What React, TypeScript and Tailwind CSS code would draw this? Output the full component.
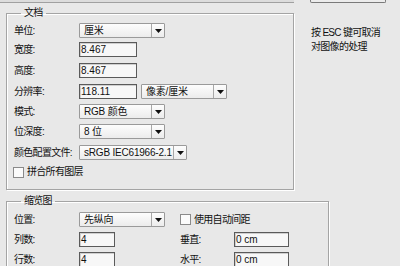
import React from 'react'

const font = { fontFamily: '"Liberation Sans", "Noto Sans CJK SC", sans-serif' }

function Arrow() {
  return (
    <svg width="7" height="4" viewBox="0 0 7 4" className="block">
      <path d="M0 0h7L3.5 4z" fill="#111" />
    </svg>
  )
}

function Select({ value, w }: { value: string; w: string }) {
  return (
    <div
      className={`flex h-[15px] ${w} items-stretch border border-[#9a9a9a] bg-gradient-to-b from-[#fdfdfd] to-[#ececec] rounded-[1px]`}
    >
      <div className="flex-1 pl-[4px] text-[10px] leading-[13px] tracking-[-0.2px] text-[#111] whitespace-nowrap overflow-hidden">{value}</div>
      <div className="flex w-[13px] items-center justify-center border-l border-[#a8a8a8]">
        <Arrow />
      </div>
    </div>
  )
}

function Input({ value, w }: { value: string; w: string }) {
  return (
    <div className={`h-[15px] ${w} border border-[#5a5a5a] bg-[#f7f7f7] pl-[1px] text-[10px] leading-[13px] text-[#111] shadow-[inset_1px_1px_0_#cfcfcf] whitespace-pre`}>
      {value}
    </div>
  )
}

function Check() {
  return <div className="h-[11px] w-[11px] border border-[#8a8a8a] bg-[#fbfbfb]" />
}

function Row({ label, children, mt }: { label: string; children: React.ReactNode; mt: string }) {
  return (
    <div className={`flex h-[15px] items-center ${mt}`}>
      <div className="w-[65px] text-[10px] leading-[15px] tracking-[-0.7px] text-[#111] whitespace-nowrap">{label}</div>
      {children}
    </div>
  )
}

export default function App() {
  return (
    <div className="h-[266px] w-[400px] overflow-hidden bg-[#e8e8e8]" style={font}>
      <div className="flex h-[3px]">
        <div className="w-[294px] border-b border-[#a0a0a0] bg-[#dcdcdc]" />
        <div className="ml-[16px] w-[76px] rounded-b-[2px] border-x border-b border-[#7a7a7a] bg-[#ececec]" />
      </div>

      <div className="flex">
        <fieldset className="ml-[6px] mt-[4px] h-[183px] w-[288px] border border-[#a4a4a4] pl-[7px] shadow-[inset_1px_1px_0_#fff,1px_1px_0_#fff]">
          <legend className="ml-[7px] px-[3px] text-[10px] leading-[12px] tracking-[-0.7px] text-[#111]">文档</legend>
          <Row label="单位:" mt="mt-[4px]">
            <Select value="厘米" w="w-[86px]" />
          </Row>
          <Row label="宽度:" mt="mt-[4px]">
            <Input value="8.467" w="w-[58px]" />
          </Row>
          <Row label="高度:" mt="mt-[6px]">
            <Input value="8.467" w="w-[58px]" />
          </Row>
          <Row label="分辨率:" mt="mt-[6px]">
            <Input value="118.11" w="w-[58px]" />
            <div className="ml-[4px]">
              <Select value="像素/厘米" w="w-[86px]" />
            </div>
          </Row>
          <Row label="模式:" mt="mt-[5px]">
            <Select value="RGB 颜色" w="w-[86px]" />
          </Row>
          <Row label="位深度:" mt="mt-[5px]">
            <Select value="8 位" w="w-[86px]" />
          </Row>
          <Row label="颜色配置文件:" mt="mt-[6px]">
            <Select value="sRGB IEC61966-2.1" w="w-[108px]" />
          </Row>
          <div className="mt-[6px] flex items-center gap-[3px] -ml-[1px]">
            <Check />
            <span className="text-[10px] leading-[12px] tracking-[-0.7px] text-[#111]">拼合所有图层</span>
          </div>
        </fieldset>

        <div className="ml-[17px] mt-[23px] text-[10px] leading-[14px] tracking-[-0.7px] text-[#111]">
          <div>按 ESC 键可取消</div>
          <div>对图像的处理</div>
        </div>
      </div>

      <fieldset className="ml-[6px] mt-[5px] h-[80px] w-[323px] border border-[#a4a4a4] pl-[7px] shadow-[inset_1px_1px_0_#fff,1px_1px_0_#fff]">
        <legend className="ml-[7px] px-[3px] text-[10px] leading-[12px] tracking-[-0.7px] text-[#111]">缩览图</legend>
        <div className="mt-[5px] flex h-[15px] items-center">
          <div className="w-[65px] text-[10px] leading-[15px] tracking-[-0.7px] text-[#111]">位置:</div>
          <Select value="先纵向" w="w-[86px]" />
          <div className="ml-[15px] flex items-center gap-[3px]">
            <Check />
            <span className="text-[10px] leading-[12px] tracking-[-0.7px] text-[#111]">使用自动间距</span>
          </div>
        </div>
        <div className="mt-[5px] flex h-[15px] items-center">
          <div className="w-[65px] text-[10px] leading-[15px] tracking-[-0.7px] text-[#111]">列数:</div>
          <Input value="4" w="w-[36px]" />
          <div className="ml-[65px] w-[54px] text-[10px] leading-[15px] tracking-[-0.7px] text-[#111]">垂直:</div>
          <Input value="0 cm" w="w-[55px]" />
        </div>
        <div className="mt-[5px] flex h-[15px] items-center">
          <div className="w-[65px] text-[10px] leading-[15px] tracking-[-0.7px] text-[#111]">行数:</div>
          <Input value="4" w="w-[36px]" />
          <div className="ml-[65px] w-[54px] text-[10px] leading-[15px] tracking-[-0.7px] text-[#111]">水平:</div>
          <Input value="0 cm" w="w-[55px]" />
        </div>
      </fieldset>
    </div>
  )
}
